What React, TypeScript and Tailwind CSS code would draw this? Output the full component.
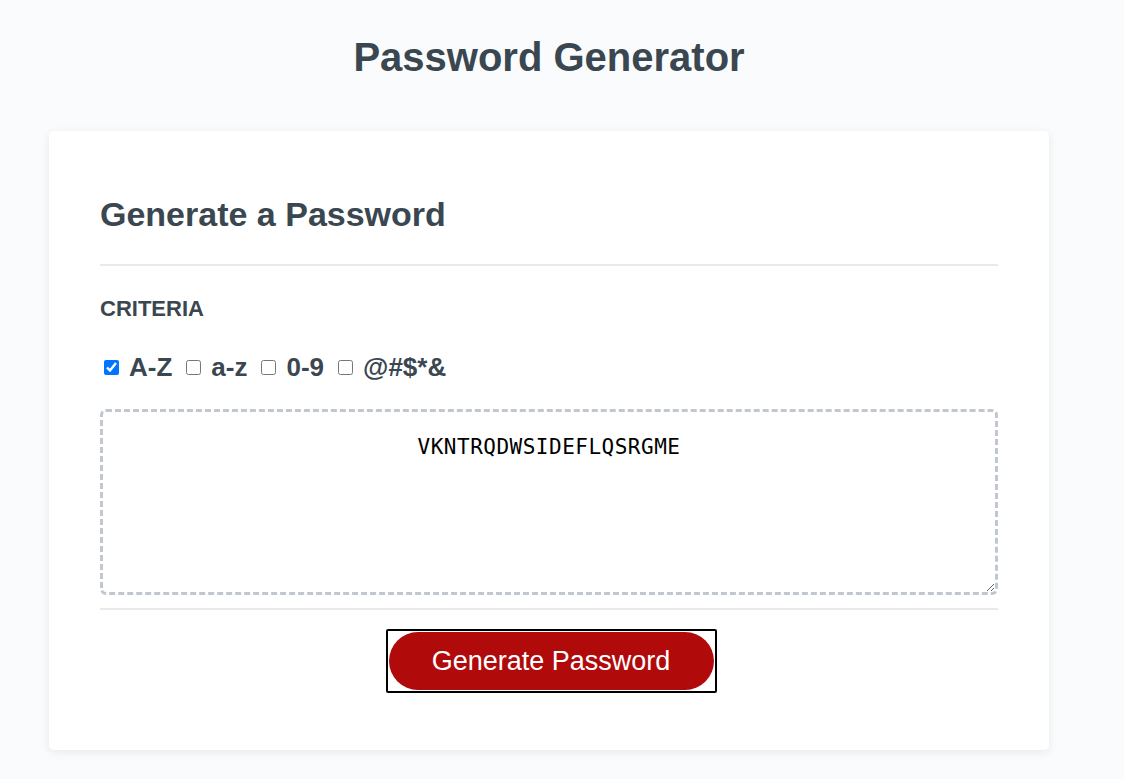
import React, { useState } from "react";

const criteria = [
  { id: "upper", label: "A-Z", checked: true },
  { id: "lower", label: "a-z", checked: false },
  { id: "number", label: "0-9", checked: false },
  { id: "special", label: "@#$*&", checked: false },
];

export default function App() {
  const [checks, setChecks] = useState(criteria.map((c) => c.checked));
  const [password] = useState("VKNTRQDWSIDEFLQSRGME");

  return (
    <div className="min-h-screen bg-[#f9fbfd] text-[#3a4750] font-['Liberation_Sans',Arial,sans-serif]">
      <div className="w-[1098px]">
        {/* Header */}
        <h1 className="text-center text-[40px] font-bold leading-[46px] pt-[34px] pb-[51px]">
          Password Generator
        </h1>

        {/* Card */}
        <div className="mx-auto w-[1000px] bg-white rounded-[5px] shadow-[0_2px_10px_rgba(0,0,0,0.08)] px-[51px] pt-[63px] pb-[57px]">
          <h2 className="text-[34px] font-bold leading-[40px] pb-[30px] border-b-2 border-[#e7e9eb]">
            Generate a Password
          </h2>

          <h3 className="text-[22px] font-bold leading-[26px] mt-[30px]">CRITERIA</h3>

          <div className="flex items-center mt-[28px] h-[34px]">
            {criteria.map((c, i) => (
              <label key={c.id} className="flex items-center text-[26px] font-bold leading-none">
                <input
                  type="checkbox"
                  checked={checks[i]}
                  onChange={() =>
                    setChecks((prev) => prev.map((v, j) => (j === i ? !v : v)))
                  }
                  className="w-[15px] h-[15px] ml-[4px] mr-[10px] accent-[#0075ff]"
                />
                <span className="mr-[10px]">{c.label}</span>
              </label>
            ))}
          </div>

          <textarea
            readOnly
            value={password}
            className="block w-full h-[186px] mt-[25px] border-[3px] border-dashed border-[#c0c7cf] rounded-[6px] text-center text-black text-[21px] tracking-[0.5px] pt-[23px] font-['DejaVu_Sans_Mono',monospace] leading-[24px] outline-none"
          />

          <div className="border-b-2 border-[#e7e9eb] mt-[13px]" />

          <div className="flex justify-center mt-[19px]">
            <div className="ml-[4px] border-2 border-black rounded-[2px] p-[1px] w-[331px] h-[64px] flex">
              <button className="flex-1 bg-[#b00a0a] text-white rounded-full text-[27px] leading-none">
                Generate Password
              </button>
            </div>
          </div>
        </div>
      </div>
    </div>
  );
}
